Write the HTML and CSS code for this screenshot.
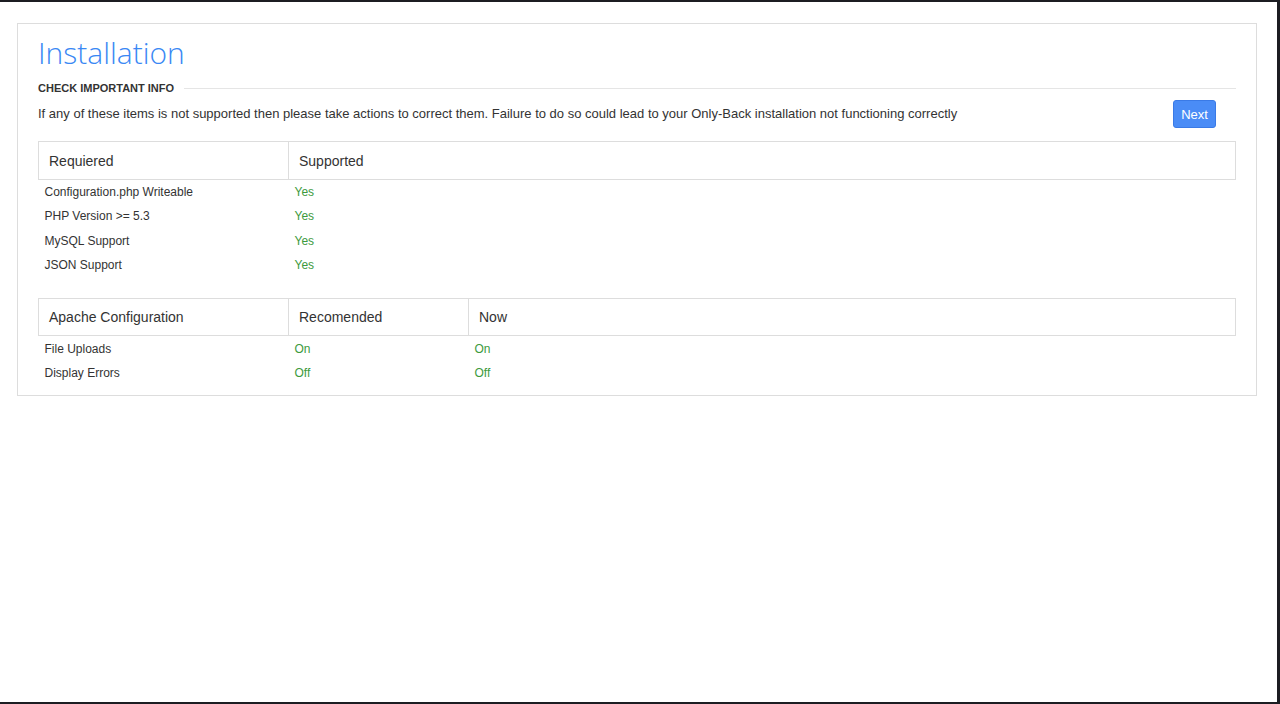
FILE: index.html
```html
<!DOCTYPE html>
<html>
<head>
<meta charset="utf-8">
<link rel="stylesheet" href="styles.css">
</head>
<body>
<div class="frame">
  <div class="panel">
    <h1 class="title">Installation</h1>
    <div class="section-head">
      <span class="section-label">CHECK IMPORTANT INFO</span>
      <span class="section-line"></span>
    </div>
    <div class="intro">
      <p class="intro-text">If any of these items is not supported then please take actions to correct them. Failure to do so could lead to your Only-Back installation not functioning correctly</p>
      <button class="btn-next">Next</button>
    </div>
    <table class="check-table first">
      <thead>
        <tr><th class="col-a">Requiered</th><th>Supported</th></tr>
      </thead>
      <tbody>
        <tr><td>Configuration.php Writeable</td><td class="ok">Yes</td></tr>
        <tr><td>PHP Version &gt;= 5.3</td><td class="ok">Yes</td></tr>
        <tr><td>MySQL Support</td><td class="ok">Yes</td></tr>
        <tr><td>JSON Support</td><td class="ok">Yes</td></tr>
      </tbody>
    </table>
    <table class="check-table second">
      <thead>
        <tr><th class="col-a">Apache Configuration</th><th class="col-b">Recomended</th><th>Now</th></tr>
      </thead>
      <tbody>
        <tr><td>File Uploads</td><td class="ok">On</td><td class="ok">On</td></tr>
        <tr><td>Display Errors</td><td class="ok">Off</td><td class="ok">Off</td></tr>
      </tbody>
    </table>
  </div>
</div>
</body>
</html>
```

FILE: styles.css
```css
html, body {
  margin: 0;
  padding: 0;
  background: #ffffff;
}
.frame {
  box-sizing: border-box;
  height: 704px;
  border-top: 2px solid #1c1d22;
  border-right: 3px solid #1c1d22;
  border-bottom: 2px solid #1c1d22;
  padding: 21px 20px 0 17px;
  font-family: "Liberation Sans", Arial, sans-serif;
  color: #333333;
}
.panel {
  border: 1px solid #dddddd;
  padding: 0 20px 11px 20px;
}
.title {
  margin: 0;
  padding-top: 10px;
  font-family: "Open Sans", sans-serif;
  font-weight: 300;
  font-size: 30px;
  line-height: 38px;
  color: #3a88f4;
}
.section-head {
  display: flex;
  align-items: center;
  gap: 10px;
  margin-top: 7px;
  height: 18px;
}
.section-label {
  font-size: 11px;
  font-weight: bold;
  color: #333333;
}
.section-line {
  flex: 1;
  height: 1px;
  background: #e5e5e5;
}
.intro {
  display: flex;
  align-items: center;
  justify-content: space-between;
  margin-top: 3px;
  padding-right: 20px;
}
.intro-text {
  margin: 0;
  font-size: 13px;
  line-height: 18px;
}
.btn-next {
  box-sizing: border-box;
  width: 43px;
  height: 28px;
  background: #4a8cf6;
  border: 1px solid #3a7ae6;
  border-radius: 3px;
  color: #ffffff;
  font-family: "Liberation Sans", Arial, sans-serif;
  font-size: 13px;
  padding: 0;
}
.check-table {
  width: 100%;
  border-collapse: collapse;
  margin-top: 13px;
}
.check-table.second {
  margin-top: 20px;
}
.check-table th {
  border: 1px solid #dddddd;
  text-align: left;
  font-weight: normal;
  font-size: 14px;
  line-height: 20px;
  padding: 8px 10px;
  color: #333333;
}
.check-table.first th {
  padding-top: 9px;
}
.check-table th.col-a {
  width: 229px;
}
.check-table th.col-b {
  width: 159px;
}
.check-table td {
  font-size: 12px;
  line-height: 14.4px;
  padding: 5px 6px;
  color: #333333;
}
.check-table.second td {
  padding: 6px 6px 4px 6px;
}
.check-table td.ok {
  color: #3d9a3d;
}
```
